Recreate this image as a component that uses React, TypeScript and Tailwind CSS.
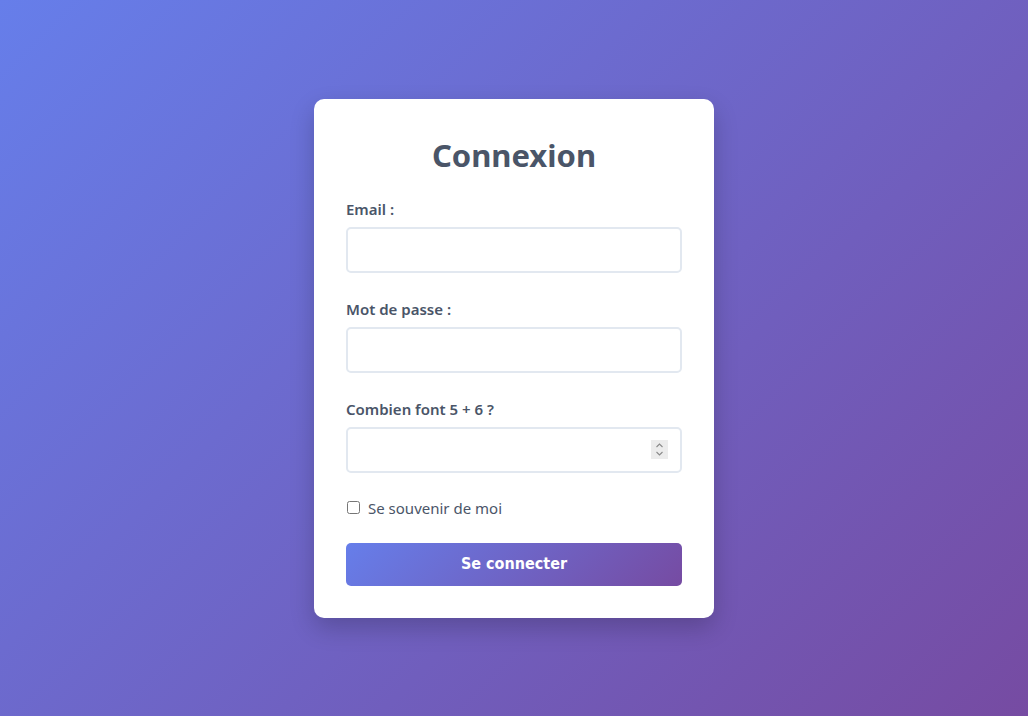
import React, { FC, ReactElement } from "react";

const Field: FC<{ label: string; type?: string; spinner?: boolean }> = ({
  label,
  type = "text",
  spinner,
}): ReactElement => (
  <div className="flex flex-col">
    <label className="mb-[7px] text-[15px] font-semibold leading-[22px] text-[#4a5568]">
      {label}
    </label>
    <div className="relative">
      <input
        type={type}
        className="h-[46px] w-full rounded-[5px] border-2 border-[#e2e8f0] bg-white px-3 text-base outline-none"
      />
      {spinner && (
        <div className="absolute right-[14px] top-[13px] flex h-[19px] w-[17px] items-center justify-center bg-[#ececec]">
          <svg width="9" height="15" viewBox="0 0 9 15" fill="none" stroke="#8a8a8a" strokeWidth="1.1">
            <path d="M1.5 5 L4.5 2 L7.5 5" />
            <path d="M1.5 10 L4.5 13 L7.5 10" />
          </svg>
        </div>
      )}
    </div>
  </div>
);

const App: FC = (): ReactElement => {
  return (
    <div
      className="flex min-h-[716px] w-full items-center justify-center bg-[linear-gradient(135deg,#667eea_0%,#764ba2_100%)]"
      style={{ fontFamily: '"Noto Sans", "Open Sans", sans-serif' }}
    >
      <div className="flex w-[400px] flex-col rounded-[10px] bg-white px-8 pb-8 pt-[34px] shadow-[0_10px_25px_rgba(0,0,0,0.2)]">
        <h2 className="mb-[21px] text-center text-[31px] font-bold leading-[44px] text-[#4a5568]">
          Connexion
        </h2>
        <div className="flex flex-col gap-[25px]">
          <Field label="Email :" type="email" />
          <Field label="Mot de passe :" type="password" />
          <Field label="Combien font 5 + 6 ?" spinner />
        </div>
        <label className="mt-[23px] flex items-center text-[15px] leading-6 text-[#4a5568]">
          <input type="checkbox" className="m-0 ml-[1px] mr-[8px] h-[13px] w-[13px]" />
          Se souvenir de moi
        </label>
        <button
          className="mt-[23px] h-[43px] w-full rounded-[5px] bg-[linear-gradient(135deg,#667eea_0%,#764ba2_100%)] text-base font-bold text-white"
          style={{ fontFamily: '"DejaVu Sans Condensed", "DejaVu Sans", sans-serif' }}
        >
          Se connecter
        </button>
      </div>
    </div>
  );
};

export default App;
